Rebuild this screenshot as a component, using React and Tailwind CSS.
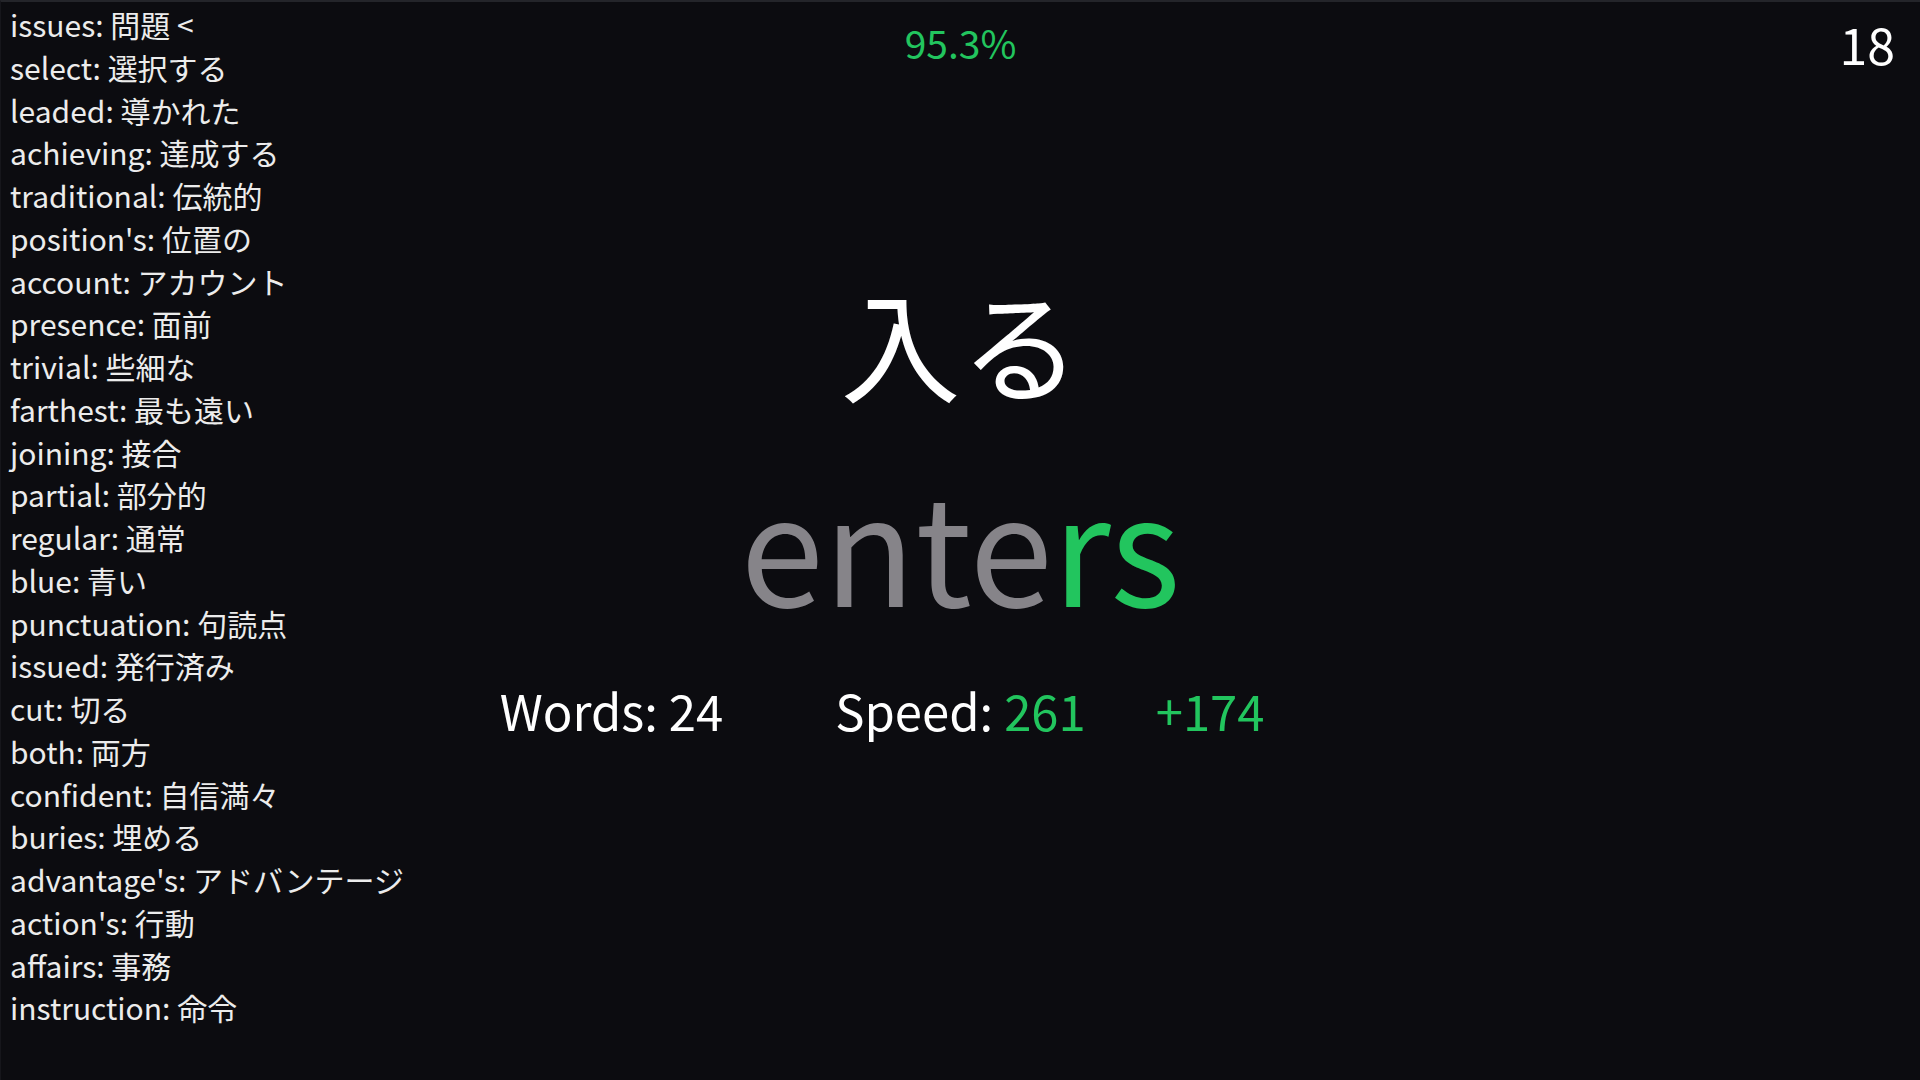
import React from "react";

const words = [
  ["issues", "問題 <"],
  ["select", "選択する"],
  ["leaded", "導かれた"],
  ["achieving", "達成する"],
  ["traditional", "伝統的"],
  ["position's", "位置の"],
  ["account", "アカウント"],
  ["presence", "面前"],
  ["trivial", "些細な"],
  ["farthest", "最も遠い"],
  ["joining", "接合"],
  ["partial", "部分的"],
  ["regular", "通常"],
  ["blue", "青い"],
  ["punctuation", "句読点"],
  ["issued", "発行済み"],
  ["cut", "切る"],
  ["both", "両方"],
  ["confident", "自信満々"],
  ["buries", "埋める"],
  ["advantage's", "アドバンテージ"],
  ["action's", "行動"],
  ["affairs", "事務"],
  ["instruction", "命令"],
];

export default function App() {
  return (
    <div className="w-[1920px] h-[1080px] overflow-hidden bg-[#0c0c10] border-t-2 border-t-[#24252a] border-l border-l-[#16161b] font-['Noto_Sans_CJK_JP','Noto_Sans',sans-serif] grid grid-cols-[1fr_auto_1fr]">
      <div className="pl-[9px] pt-[1px] text-[30px] leading-[42.75px] text-[#ececec]">
        {words.map(([en, ja]) => (
          <div key={en} className="whitespace-nowrap">
            {en}: {ja}
          </div>
        ))}
      </div>

      <div className="flex flex-col items-center">
        <div className="mt-[21px] text-[39px] leading-none text-[#22c55e]">95.3%</div>
        <div className="mt-[220px] text-[120px] leading-none text-white">入る</div>
        <div className="mt-[65px] text-[150px] leading-none">
          <span className="text-[#868489]">ente</span>
          <span className="text-[#22c55e]">rs</span>
        </div>
        <div className="mt-[68px] grid grid-cols-[1fr_auto_1fr] text-[49px] leading-none text-white">
          <div className="justify-self-end mr-[112px] whitespace-nowrap">Words: 24</div>
          <div className="whitespace-nowrap">
            Speed: <span className="text-[#22c55e]">261</span>
          </div>
          <div className="justify-self-start ml-[70px] text-[#22c55e]">+174</div>
        </div>
      </div>

      <div className="flex justify-end items-start pr-[25px] pt-[16px]">
        <div className="text-[50px] leading-none text-white">18</div>
      </div>
    </div>
  );
}
